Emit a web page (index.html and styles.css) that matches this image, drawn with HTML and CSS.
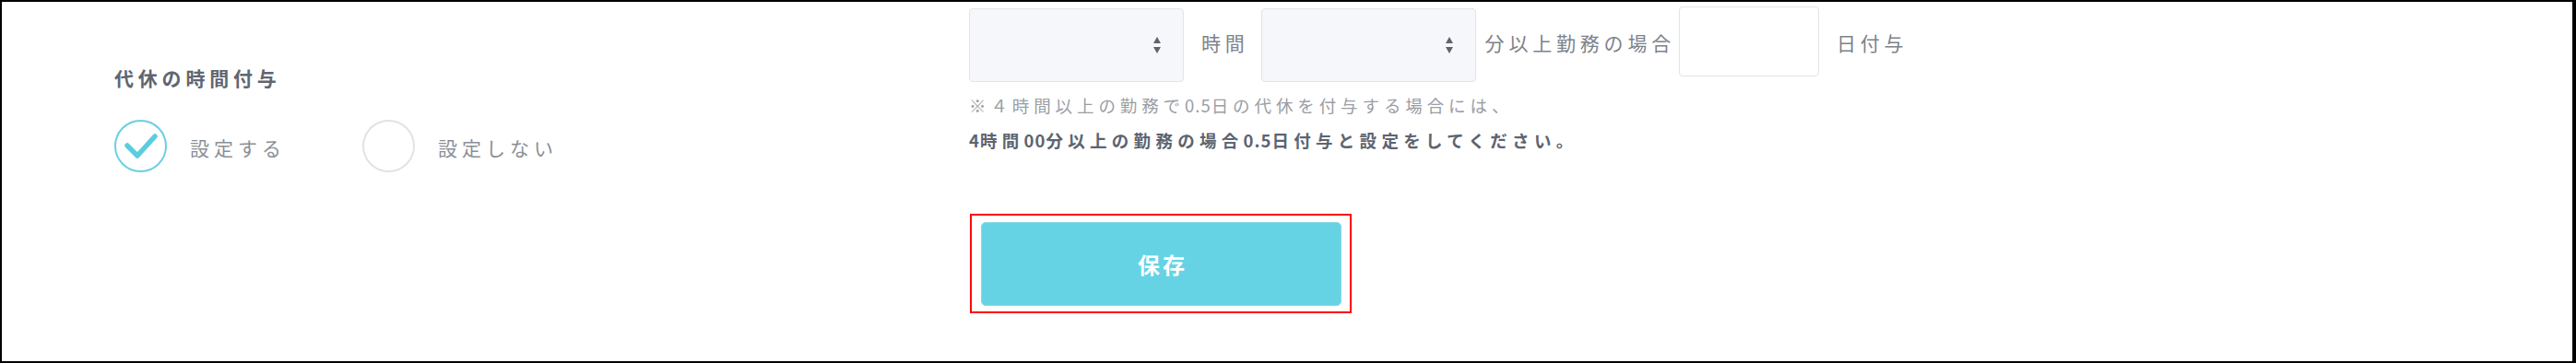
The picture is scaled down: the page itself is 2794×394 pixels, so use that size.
FILE: index.html
```html
<!DOCTYPE html>
<html lang="ja">
<head>
<meta charset="utf-8">
<title>代休の時間付与</title>
<link rel="stylesheet" href="styles.css">
</head>
<body>
<div class="frame">
  <div class="left">
    <div class="title">代休の時間付与</div>
    <div class="radios">
      <label class="radio">
        <span class="circle checked">
          <svg width="53" height="53" viewBox="0 0 53 53"><path d="M12 26 L23 37 L42 16" fill="none" stroke="#5ccde0" stroke-width="5.5" stroke-linecap="round" stroke-linejoin="round"/></svg>
        </span>
        <span class="radio-text">設定する</span>
      </label>
      <label class="radio">
        <span class="circle"></span>
        <span class="radio-text">設定しない</span>
      </label>
    </div>
  </div>
  <div class="right">
    <div class="row">
      <div class="select">
        <select><option></option></select>
        <svg class="arrows" width="10" height="20" viewBox="0 0 10 20"><path d="M5 1 L9 8 L1 8 Z M1 12 L9 12 L5 19 Z" fill="#5e6470"/></svg>
      </div>
      <span class="unit unit-hour">時間</span>
      <div class="select">
        <select><option></option></select>
        <svg class="arrows" width="10" height="20" viewBox="0 0 10 20"><path d="M5 1 L9 8 L1 8 Z M1 12 L9 12 L5 19 Z" fill="#5e6470"/></svg>
      </div>
      <span class="unit unit-min">分以上勤務の場合</span>
      <input class="num" type="text">
      <span class="unit unit-day">日付与</span>
    </div>
    <div class="notes">
      <p class="note">※４時間以上の勤務で<span class="digits">0.5</span>日の代休を付与する場合には、</p>
      <p class="note strong"><span class="digits">4</span>時間<span class="digits">00</span>分以上の勤務の場合<span class="digits">0.5</span>日付与と設定をしてください。</p>
    </div>
    <div class="save-wrap">
      <button class="save" type="button">保存</button>
    </div>
  </div>
</div>
</body>
</html>
```

FILE: styles.css
```css
html, body {
  margin: 0;
  padding: 0;
  background: #ffffff;
}

body {
  font-family: "Noto Sans CJK JP", "Noto Sans", sans-serif;
}

.frame {
  box-sizing: border-box;
  width: 2794px;
  height: 394px;
  border-style: solid;
  border-color: #000000;
  border-width: 2px 4px 2px 2px;
  display: flex;
  background: #ffffff;
}

.left {
  box-sizing: border-box;
  width: 1049px;
  flex: none;
  padding: 67px 0 0 122px;
}

.title {
  font-size: 21px;
  line-height: 30px;
  font-weight: 700;
  color: #5f6672;
  letter-spacing: 4.8px;
}

.radios {
  display: flex;
  margin-top: 31px;
}

.radio {
  width: 269px;
  display: flex;
  align-items: center;
}

.circle {
  box-sizing: border-box;
  width: 57px;
  height: 57px;
  border-radius: 50%;
  border: 2px solid #e0e3e7;
  display: flex;
  align-items: center;
  justify-content: center;
  flex: none;
}

.circle.checked {
  border-color: #6ad0e1;
}

.radio-text {
  margin-left: 25px;
  margin-top: 3px;
  font-size: 21px;
  line-height: 30px;
  color: #8a8f96;
  letter-spacing: 5px;
}

.right {
  flex: 1;
  padding-top: 5px;
}

.row {
  display: flex;
  align-items: flex-start;
}

.select {
  position: relative;
  width: 233px;
  height: 80px;
  margin-top: 2px;
  flex: none;
}

.select select {
  box-sizing: border-box;
  width: 100%;
  height: 100%;
  appearance: none;
  -webkit-appearance: none;
  background: #f6f7fa;
  border: 1px solid #e1e4ea;
  border-radius: 4px;
  margin: 0;
  padding: 0 12px;
  outline: none;
}

.arrows {
  position: absolute;
  right: 24px;
  top: 30px;
}

.unit {
  font-size: 21px;
  line-height: 30px;
  color: #7d828a;
  letter-spacing: 4.8px;
  margin-top: 24px;
  white-space: nowrap;
}

.unit-hour {
  margin-left: 19px;
  margin-right: 13px;
}

.unit-min {
  margin-left: 10px;
  margin-right: 4px;
}

.unit-day {
  margin-left: 19px;
}

.num {
  box-sizing: border-box;
  width: 152px;
  height: 76px;
  margin: 0;
  border: 1px solid #e1e4ea;
  border-radius: 4px;
  background: #ffffff;
  outline: none;
  flex: none;
}

.notes {
  margin-top: 6px;
}

.note {
  margin: 0;
  font-size: 18.5px;
  line-height: 38px;
  color: #9a9ea5;
  letter-spacing: 4.9px;
  white-space: nowrap;
}

.note.strong {
  font-weight: 700;
  color: #5d6470;
  letter-spacing: 5.3px;
}

.note .digits {
  letter-spacing: 1px;
}

.save-wrap {
  display: inline-block;
  margin-top: 61px;
  margin-left: 1px;
  border: 2px solid #ff0000;
  padding: 7px 9px 6px 10px;
}

.save {
  display: block;
  box-sizing: border-box;
  width: 391px;
  height: 91px;
  margin: 0;
  padding: 0 0 0 3px;
  border: 1px solid #8adae7;
  border-radius: 5px;
  background: #66d3e5;
  color: #ffffff;
  font-family: "Noto Sans CJK JP", "Noto Sans", sans-serif;
  font-size: 24px;
  font-weight: 700;
  letter-spacing: 3px;
}
```
